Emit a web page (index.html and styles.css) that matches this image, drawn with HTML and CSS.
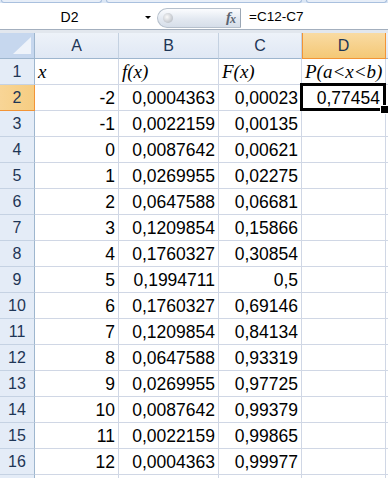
FILE: index.html
```html
<!DOCTYPE html>
<html lang="ru">
<head>
  <meta charset="UTF-8"/>
  <title>Книга1 - Microsoft Excel</title>
  <link rel="stylesheet" href="styles.css">
</head>
<body>

<!-- ribbon bottom edge -->
<div class="ribbon"><span class="g1"></span><span class="g2"></span><span class="g3"></span></div>

<!-- formula bar -->
<div class="fbar">
  <div class="namebox">
    <div class="nb-text">D2</div>
    <div class="nb-arrow"></div>
  </div>
  <div class="fx-pill">
    <span class="knob"></span>
    <span class="fx">f<sub>x</sub></span>
  </div>
  <div class="formula">=C12-C7</div>
</div>
<div class="fgap"></div>

<!-- sheet -->
<div class="sheet">
  <div class="corner"><svg width="20" height="18" viewBox="0 0 20 18"><polygon points="19,0 19,17 1,17" fill="#eef3fa"/></svg></div>
  <div class="h">A</div><div class="h">B</div><div class="h">C</div><div class="h sel">D</div><div class="h"></div>

  <div class="r">1</div><div class="c lbl">x</div><div class="c lbl">f(x)</div><div class="c lbl">F(x)</div><div class="c lbl">P(a&lt;x&lt;b)</div><div class="c"></div>
  <div class="r sel">2</div><div class="c num">-2</div><div class="c num">0,0004363</div><div class="c num">0,00023</div><div class="c num active">0,77454</div><div class="c"></div>
  <div class="r">3</div><div class="c num">-1</div><div class="c num">0,0022159</div><div class="c num">0,00135</div><div class="c"></div><div class="c"></div>
  <div class="r">4</div><div class="c num">0</div><div class="c num">0,0087642</div><div class="c num">0,00621</div><div class="c"></div><div class="c"></div>
  <div class="r">5</div><div class="c num">1</div><div class="c num">0,0269955</div><div class="c num">0,02275</div><div class="c"></div><div class="c"></div>
  <div class="r">6</div><div class="c num">2</div><div class="c num">0,0647588</div><div class="c num">0,06681</div><div class="c"></div><div class="c"></div>
  <div class="r">7</div><div class="c num">3</div><div class="c num">0,1209854</div><div class="c num">0,15866</div><div class="c"></div><div class="c"></div>
  <div class="r">8</div><div class="c num">4</div><div class="c num">0,1760327</div><div class="c num">0,30854</div><div class="c"></div><div class="c"></div>
  <div class="r">9</div><div class="c num">5</div><div class="c num">0,1994711</div><div class="c num">0,5</div><div class="c"></div><div class="c"></div>
  <div class="r">10</div><div class="c num">6</div><div class="c num">0,1760327</div><div class="c num">0,69146</div><div class="c"></div><div class="c"></div>
  <div class="r">11</div><div class="c num">7</div><div class="c num">0,1209854</div><div class="c num">0,84134</div><div class="c"></div><div class="c"></div>
  <div class="r">12</div><div class="c num">8</div><div class="c num">0,0647588</div><div class="c num">0,93319</div><div class="c"></div><div class="c"></div>
  <div class="r">13</div><div class="c num">9</div><div class="c num">0,0269955</div><div class="c num">0,97725</div><div class="c"></div><div class="c"></div>
  <div class="r">14</div><div class="c num">10</div><div class="c num">0,0087642</div><div class="c num">0,99379</div><div class="c"></div><div class="c"></div>
  <div class="r">15</div><div class="c num">11</div><div class="c num">0,0022159</div><div class="c num">0,99865</div><div class="c"></div><div class="c"></div>
  <div class="r">16</div><div class="c num">12</div><div class="c num">0,0004363</div><div class="c num">0,99977</div><div class="c"></div><div class="c"></div>
  <div class="r"></div><div class="c"></div><div class="c"></div><div class="c"></div><div class="c"></div><div class="c"></div>
</div>

</body>
</html>
```

FILE: styles.css
```css
*{box-sizing:border-box}
body{margin:0;width:388px;height:478px;overflow:hidden;background:#fff;font-family:"Liberation Sans",Arial,sans-serif;color:#000}

/* ribbon edge */
.ribbon{height:3px;display:flex;gap:4px;background:#dce7f5;padding:0 1px}
.ribbon span{border:1px solid #a9c0de;border-top:none;border-radius:0 0 3px 3px;background:#e7eef8}
.ribbon .g1{width:101px}
.ribbon .g2{width:196px}
.ribbon .g3{flex:1}

/* formula bar */
.fbar{height:27px;display:flex;background:#fff;border-bottom:1px solid #a3afbe}
.namebox{width:157px;display:flex;align-items:center}
.nb-text{width:139px;text-align:center;font-size:14px;padding-top:1px}
.nb-arrow{width:0;height:0;margin-left:6px;margin-top:2px;border-left:3px solid transparent;border-right:3px solid transparent;border-top:3px solid #000}
.fx-pill{width:84px;height:20px;margin-top:5px;display:flex;align-items:center;justify-content:space-between;padding:0 5px 0 5px;border:1px solid #b6c0cc;border-right:1px solid #9aa6b4;border-radius:10px 0 0 10px;background:linear-gradient(#fbfcfe,#e3e9f1 55%,#d6dee9)}
.knob{width:10px;height:10px;border-radius:50%;background:radial-gradient(circle at 40% 40%,#fafafa,#c5c9cf 65%,#a3a9b1)}
.fx{font-family:"Liberation Serif",serif;font-style:italic;font-weight:bold;font-size:15px;color:#5b6572;letter-spacing:-1px}
.fx sub{font-size:12px;vertical-align:-1px}
.formula{flex:1;display:flex;align-items:center;padding-left:8px;font-size:13.5px;padding-top:1px}
.fgap{height:3px;background:#e2e7ee}

/* sheet grid */
.sheet{display:grid;grid-template-columns:35px 84px 100px 83px 84px 1fr;grid-auto-rows:26px}
.corner{background:#c6d7ee;border-right:1px solid #9eb6ce;border-bottom:1px solid #9eb6ce;display:flex;align-items:flex-end;justify-content:flex-end;padding:0 2px 3px 0}
.h{background:linear-gradient(#edf2f9,#e0e8f4);border-right:1px solid #c4d1e1;border-bottom:1px solid #9eb6ce;display:flex;align-items:center;justify-content:center;font-size:16px;color:#1e3656}
.h.sel{background:linear-gradient(#f9dba3,#f4c876);border-right:1px solid #f29436;border-bottom:1px solid #f29436;box-shadow:inset 1px 0 0 #f29436}
.r{background:#e4ecf7;border-right:1px solid #9eb6ce;border-bottom:1px solid #c5d2e3;display:flex;align-items:center;justify-content:center;font-size:16px;color:#1e3656}
.r.sel{background:linear-gradient(90deg,#f8d596,#f6cd82);border-right:1px solid #f29436;border-bottom:1px solid #f29436}
.c{border-right:1px solid #d0d7e5;border-bottom:1px solid #d0d7e5;display:flex;align-items:center;font-size:17.5px;padding:0 3px;white-space:nowrap}
.num{justify-content:flex-end;padding-top:1px}
.lbl{font-family:"Liberation Serif",serif;font-style:italic;font-size:19px;padding-left:3px}
.active{position:relative;z-index:2;padding-right:5px}
.active::after{content:"";position:absolute;left:-2px;top:-2px;right:-1px;bottom:-1px;border:3px solid #000}
.active::before{content:"";position:absolute;right:-4px;bottom:-4px;width:7px;height:7px;background:#000;border:1px solid #fff;z-index:3}
```
